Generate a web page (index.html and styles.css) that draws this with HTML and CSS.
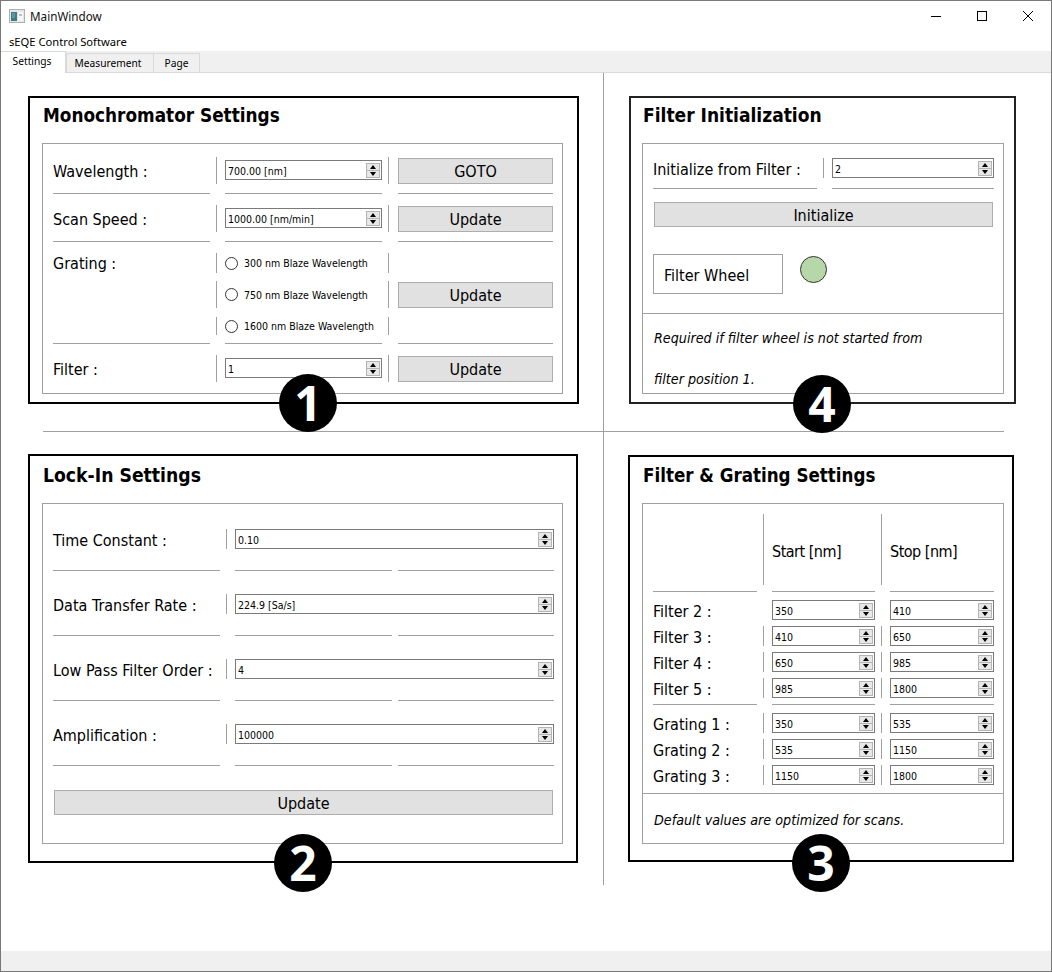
FILE: index.html
```html
<!DOCTYPE html>
<html lang="en">
<head>
<meta charset="utf-8">
<title>MainWindow</title>
<link rel="stylesheet" href="styles.css">
</head>
<body>
<div class="window">
  <header class="titlebar">
    <svg class="app-icon" width="16" height="14" viewBox="0 0 16 14"><rect x="0.5" y="0.5" width="15" height="13" fill="#e6e6e6" stroke="#b0b0b0"/><rect x="2" y="3" width="6" height="9" fill="#3c7f78"/><rect x="3" y="4" width="3" height="5" fill="#5f93b4"/><rect x="9" y="3" width="5" height="9" fill="#f6f6f6"/><rect x="10" y="5" width="3" height="2" fill="#c0c0c0"/></svg>
    <span class="title-text">MainWindow</span>
    <div class="win-controls">
      <span class="win-btn"><svg width="12" height="12" viewBox="0 0 12 12"><path d="M1 6.5H11" stroke="#000" fill="none"/></svg></span>
      <span class="win-btn"><svg width="12" height="12" viewBox="0 0 12 12"><rect x="1.5" y="1.5" width="9" height="9" stroke="#000" fill="none"/></svg></span>
      <span class="win-btn"><svg width="12" height="12" viewBox="0 0 12 12"><path d="M1 1L11 11M11 1L1 11" stroke="#000" fill="none"/></svg></span>
    </div>
  </header>
  <nav class="menubar">sEQE Control Software</nav>
  <div class="tabbar">
    <span class="tab tab-active">Settings</span>
    <span class="tab tab-measure">Measurement</span>
    <span class="tab tab-page">Page</span>
  </div>

  <main class="content">
    <div class="cell">
      <section class="panel panel-mono">
        <h2 class="panel-title">Monochromator Settings</h2>
        <div class="box box-mono">
          <div class="row mono-cols row-27">
            <span class="label">Wavelength :</span><i class="vl vl-27"></i>
            <div class="spin spin-top"><span class="val">700.00 [nm]</span><span class="arrows"><b class="up"></b><b class="dn"></b></span></div><i class="vl vl-27"></i>
            <button class="btn btn-top">GOTO</button>
          </div>
          <div class="rule mono-cols"><i class="hr"></i><i></i><i class="hr"></i><i></i><i class="hr"></i></div>
          <div class="row mono-cols row-27">
            <span class="label">Scan Speed :</span><i class="vl vl-27"></i>
            <div class="spin spin-top"><span class="val">1000.00 [nm/min]</span><span class="arrows"><b class="up"></b><b class="dn"></b></span></div><i class="vl vl-27"></i>
            <button class="btn btn-top">Update</button>
          </div>
          <div class="rule mono-cols"><i class="hr"></i><i></i><i class="hr"></i><i></i><i class="hr"></i></div>
          <div class="row mono-cols row-20">
            <span class="label">Grating :</span><i class="vl vl-20"></i>
            <label class="radio"><span class="dot"></span>300 nm Blaze Wavelength</label><i class="vl vl-20"></i>
            <span></span>
          </div>
          <div class="row mono-cols row-27 row-gap8">
            <span></span><i class="vl vl-27"></i>
            <label class="radio"><span class="dot"></span>750 nm Blaze Wavelength</label><i class="vl vl-27"></i>
            <button class="btn btn-top">Update</button>
          </div>
          <div class="row mono-cols row-18 row-gap9">
            <span></span><i class="vl vl-18"></i>
            <label class="radio"><span class="dot"></span>1600 nm Blaze Wavelength</label><i class="vl vl-18"></i>
            <span></span>
          </div>
          <div class="rule rule-after-grating mono-cols"><i class="hr"></i><i></i><i class="hr"></i><i></i><i class="hr"></i></div>
          <div class="row mono-cols row-27">
            <span class="label">Filter :</span><i class="vl vl-27"></i>
            <div class="spin spin-top"><span class="val">1</span><span class="arrows"><b class="up"></b><b class="dn"></b></span></div><i class="vl vl-27"></i>
            <button class="btn btn-top">Update</button>
          </div>
        </div>
        <span class="badge badge-1">1</span>
      </section>
    </div>

    <i class="v-divider"></i>

    <div class="cell">
      <section class="panel panel-init">
        <h2 class="panel-title">Filter Initialization</h2>
        <div class="box box-init">
          <div class="init-top">
            <div class="row init-cols row-20">
              <span class="label">Initialize from Filter :</span><i class="vl vl-20"></i>
              <div class="spin"><span class="val">2</span><span class="arrows"><b class="up"></b><b class="dn"></b></span></div>
            </div>
            <div class="rule init-cols"><i class="hr"></i><i></i><i class="hr"></i></div>
            <button class="btn btn-init">Initialize</button>
            <div class="wheel-row">
              <span class="wheel-label">Filter Wheel</span>
              <span class="led"></span>
            </div>
          </div>
          <p class="note note-init">Required if filter wheel is not started from<br>filter position 1.</p>
        </div>
        <span class="badge badge-4">4</span>
      </section>
    </div>

    <i class="h-divider h-left"></i>
    <i class="h-divider h-right"></i>

    <div class="cell">
      <section class="panel panel-lock">
        <h2 class="panel-title">Lock-In Settings</h2>
        <div class="box box-lock">
          <div class="row lock-cols row-20">
            <span class="label">Time Constant :</span><i class="vl vl-20"></i>
            <div class="spin"><span class="val">0.10</span><span class="arrows"><b class="up"></b><b class="dn"></b></span></div>
          </div>
          <div class="rule rule-lock lock-rule"><i class="hr"></i><i></i><i class="hr"></i><i></i><i class="hr"></i></div>
          <div class="row lock-cols row-20">
            <span class="label">Data Transfer Rate :</span><i class="vl vl-20"></i>
            <div class="spin"><span class="val">224.9 [Sa/s]</span><span class="arrows"><b class="up"></b><b class="dn"></b></span></div>
          </div>
          <div class="rule rule-lock lock-rule"><i class="hr"></i><i></i><i class="hr"></i><i></i><i class="hr"></i></div>
          <div class="row lock-cols row-20">
            <span class="label">Low Pass Filter Order :</span><i class="vl vl-20"></i>
            <div class="spin"><span class="val">4</span><span class="arrows"><b class="up"></b><b class="dn"></b></span></div>
          </div>
          <div class="rule rule-lock lock-rule"><i class="hr"></i><i></i><i class="hr"></i><i></i><i class="hr"></i></div>
          <div class="row lock-cols row-20">
            <span class="label">Amplification :</span><i class="vl vl-20"></i>
            <div class="spin"><span class="val">100000</span><span class="arrows"><b class="up"></b><b class="dn"></b></span></div>
          </div>
          <div class="rule rule-lock lock-rule"><i class="hr"></i><i></i><i class="hr"></i><i></i><i class="hr"></i></div>
          <button class="btn btn-lock">Update</button>
        </div>
        <span class="badge badge-2">2</span>
      </section>
    </div>

    <div class="cell">
      <section class="panel panel-fg">
        <h2 class="panel-title">Filter &amp; Grating Settings</h2>
        <div class="box box-fg">
          <div class="fg-top">
            <div class="row fg-cols fg-head">
              <span></span><i class="vl vl-71"></i>
              <span class="label label-head">Start [nm]</span><i class="vl vl-71"></i>
              <span class="label label-head">Stop [nm]</span>
            </div>
            <div class="rule fg-rule fg-cols"><i class="hr"></i><i></i><i class="hr"></i><i></i><i class="hr"></i></div>
            <div class="row fg-cols row-20">
              <span class="label">Filter 2 :</span><i></i>
              <div class="spin"><span class="val">350</span><span class="arrows"><b class="up"></b><b class="dn"></b></span></div><i></i>
              <div class="spin"><span class="val">410</span><span class="arrows"><b class="up"></b><b class="dn"></b></span></div>
            </div>
            <div class="row fg-cols row-20 row-gap6">
              <span class="label">Filter 3 :</span><i class="vl vl-20"></i>
              <div class="spin"><span class="val">410</span><span class="arrows"><b class="up"></b><b class="dn"></b></span></div><i class="vl vl-20"></i>
              <div class="spin"><span class="val">650</span><span class="arrows"><b class="up"></b><b class="dn"></b></span></div>
            </div>
            <div class="row fg-cols row-20 row-gap6">
              <span class="label">Filter 4 :</span><i class="vl vl-20"></i>
              <div class="spin"><span class="val">650</span><span class="arrows"><b class="up"></b><b class="dn"></b></span></div><i class="vl vl-20"></i>
              <div class="spin"><span class="val">985</span><span class="arrows"><b class="up"></b><b class="dn"></b></span></div>
            </div>
            <div class="row fg-cols row-20 row-gap6">
              <span class="label">Filter 5 :</span><i class="vl vl-20"></i>
              <div class="spin"><span class="val">985</span><span class="arrows"><b class="up"></b><b class="dn"></b></span></div><i class="vl vl-20"></i>
              <div class="spin"><span class="val">1800</span><span class="arrows"><b class="up"></b><b class="dn"></b></span></div>
            </div>
            <div class="rule fg-rule fg-cols"><i class="hr"></i><i></i><i class="hr"></i><i></i><i class="hr"></i></div>
            <div class="row fg-cols row-20">
              <span class="label">Grating 1 :</span><i class="vl vl-20"></i>
              <div class="spin"><span class="val">350</span><span class="arrows"><b class="up"></b><b class="dn"></b></span></div><i class="vl vl-20"></i>
              <div class="spin"><span class="val">535</span><span class="arrows"><b class="up"></b><b class="dn"></b></span></div>
            </div>
            <div class="row fg-cols row-20 row-gap6">
              <span class="label">Grating 2 :</span><i class="vl vl-20"></i>
              <div class="spin"><span class="val">535</span><span class="arrows"><b class="up"></b><b class="dn"></b></span></div><i class="vl vl-20"></i>
              <div class="spin"><span class="val">1150</span><span class="arrows"><b class="up"></b><b class="dn"></b></span></div>
            </div>
            <div class="row fg-cols row-20 row-gap6">
              <span class="label">Grating 3 :</span><i class="vl vl-20"></i>
              <div class="spin"><span class="val">1150</span><span class="arrows"><b class="up"></b><b class="dn"></b></span></div><i class="vl vl-20"></i>
              <div class="spin"><span class="val">1800</span><span class="arrows"><b class="up"></b><b class="dn"></b></span></div>
            </div>
          </div>
          <p class="note note-fg">Default values are optimized for scans.</p>
        </div>
        <span class="badge badge-3">3</span>
      </section>
    </div>
  </main>

  <footer class="statusbar"></footer>
</div>
</body>
</html>
```

FILE: styles.css
```css
* { box-sizing: border-box; }
html, body { margin: 0; padding: 0; background: #fff; }
body {
  font-family: "DejaVu Sans Condensed", "DejaVu Sans", sans-serif;
  color: #000;
}
.window {
  width: 1052px; height: 972px;
  border: 1px solid #787878;
  display: flex; flex-direction: column;
  background: #fff;
  overflow: hidden;
}
.titlebar {
  height: 32px; flex: none;
  display: flex; align-items: center;
  padding: 0 0 2px 8px;
  font-family: "Noto Sans", sans-serif; font-size: 11.7px;
}
.app-icon { flex: none; margin-right: 5px; }
.title-text { flex: 1; color: #111; }
.win-controls { display: flex; height: 100%; }
.win-btn { width: 46px; display: flex; align-items: center; justify-content: center; }
.menubar {
  height: 18px; flex: none;
  padding-left: 8px; line-height: 18px;
  font-family: "Noto Sans", sans-serif; font-size: 11.2px;
}
.tabbar {
  height: 22px; flex: none;
  background: #f0f0f0;
  border-bottom: 1px solid #d9d9d9;
  display: flex; align-items: flex-end;
  font-family: "Noto Sans", sans-serif; font-size: 10.2px;
}
.tab {
  height: 19px; line-height: 18px; text-align: center;
  border: 1px solid #d9d9d9; border-bottom: 0;
  background: #f0f0f0;
  margin-left: -1px;
}
.tab-active {
  width: 65px; height: 22px; margin: 0 0 -1px 0;
  background: #fff; line-height: 19px;
  border-left: 0; position: relative;
  padding-right: 2px;
}
.tab-measure { width: 88px; margin-left: 0; padding-right: 4px; }
.tab-page { width: 47px; }

.content {
  flex: 1;
  display: grid;
  grid-template-columns: 602px 1px 1fr;
  grid-template-rows: 358px 1px 453px 1fr;
}
.cell { min-width: 0; }
.v-divider { grid-column: 2; grid-row: 1 / 4; background: #a0a0a0; height: 812px; }
.h-divider { background: #a0a0a0; height: 1px; grid-row: 2; }
.h-left { grid-column: 1; margin-left: 42px; }
.h-right { grid-column: 3; margin-right: 47px; }

.panel {
  position: relative;
  border: 2px solid #000;
  background: #fff;
}
.panel-mono { width: 551px; height: 308px; margin: 23px 0 0 27px; }
.panel-init { width: 387px; height: 308px; margin: 23px 0 0 25px; border-color: #222; }
.panel-lock { width: 550px; height: 409px; margin: 22px 0 0 27px; }
.panel-fg { width: 386px; height: 407px; margin: 23px 0 0 24px; }

.panel-title {
  margin: 0 0 11px 13px;
  height: 34px; line-height: 36px;
  font-size: 18.8px; font-weight: 700;
  white-space: nowrap;
}
.panel-init .panel-title { margin-left: 12px; font-size: 19px; line-height: 34px; }
.panel-lock .panel-title { margin-bottom: 13px; height: 34px; line-height: 40px; font-size: 19.2px; }
.panel-fg .panel-title { margin-bottom: 12px; height: 34px; line-height: 38px; font-size: 18.6px; }

.box {
  margin-left: 12px;
  border: 1px solid #a0a0a0;
  display: flex; flex-direction: column;
}
.panel-init .box { margin-left: 11px; }
.box-mono { width: 521px; height: 251px; padding: 13px 0 0 10px; }
.box-init { width: 362px; height: 251px; }
.box-lock { width: 521px; height: 341px; padding: 25px 0 0 10px; }
.box-fg { width: 362px; height: 341px; }

.row { display: grid; align-items: center; }
.row-27 { height: 27px; }
.row-20 { height: 20px; }
.row-18 { height: 18px; }
.row-gap8 { margin-top: 8px; }
.row-gap9 { margin-top: 9px; }
.row-gap6 { margin-top: 6px; }

.mono-cols { display: grid; grid-template-columns: 157px 15px 157px 16px 155px; }
.lock-cols { grid-template-columns: 167px 15px 319px; }
.lock-rule { display: grid; grid-template-columns: 167px 15px 157px 6px 156px; }
.init-cols { display: grid; grid-template-columns: 164px 15px 162px; }
.fg-cols { display: grid; grid-template-columns: 104px 15px 103px 15px 104px; }

.rule { margin: 9px 0 11px; height: 1px; }
.rule-after-grating { margin-top: 8px; }
.rule-lock { margin: 21px 0 23px; }
.fg-rule { margin: 6px 0 8px; }
.hr { display: block; height: 1px; background: #a0a0a0; }
.vl { display: block; width: 1px; margin-left: 6px; background: #a0a0a0; align-self: start; }
.vl-27 { height: 27px; }
.vl-20 { height: 20px; }
.vl-18 { height: 18px; }
.vl-71 { height: 71px; }

.label { font-size: 16px; line-height: 20px; white-space: nowrap; position: relative; top: 1px; }
.box-lock .label, .fg-top .label, .init-top .label { top: 2px; }
.label-head { letter-spacing: -0.5px; }

.spin {
  height: 20px;
  border: 1px solid #7a7a7a;
  background: #fff;
  display: flex; align-items: center; justify-content: space-between;
  padding: 0 1px 0 2px;
  font-size: 10.5px;
}
.spin-top { align-self: start; margin-top: 3px; }
.val { white-space: nowrap; padding-top: 1px; }
.arrows { display: flex; flex-direction: column; width: 14px; height: 15px; flex: none; }
.arrows b {
  display: flex; align-items: center; justify-content: center;
  height: 8px; background: #e8e8e8; border: 1px solid #b4b4b4;
}
.arrows b + b { border-top: 0; height: 7px; }
.arrows b::after {
  content: ""; width: 0; height: 0;
  border-left: 3.5px solid transparent; border-right: 3.5px solid transparent;
}
.arrows .up::after { border-bottom: 4px solid #000; }
.arrows .dn::after { border-top: 4px solid #000; }

.btn {
  display: block; padding: 0;
  height: 26px;
  background: #e1e1e1; border: 1px solid #adadad; border-radius: 0;
  font: 16px "DejaVu Sans Condensed", "DejaVu Sans", sans-serif;
  color: #000;
}
.btn-top { align-self: start; margin-top: 1px; }
.btn-lock { width: 499px; height: 25px; margin: 1px 0 0 1px; padding-top: 1px; }
.btn-init { width: 339px; height: 25px; margin-left: 1px; padding-top: 1px; }

.radio { display: flex; align-items: center; font-size: 10.5px; white-space: nowrap; align-self: center; }
.dot {
  width: 13px; height: 13px; flex: none;
  border: 1px solid #333; border-radius: 50%;
  margin-right: 6px; background: #fff;
}

.init-top { height: 170px; flex: none; padding: 14px 0 0 10px; border-bottom: 1px solid #a0a0a0; }
.init-top .rule { margin: 10px 0 13px; }
.wheel-row { display: flex; margin-top: 27px; }
.wheel-label {
  width: 130px; height: 40px;
  border: 1px solid #a0a0a0;
  padding-left: 10px;
  font-size: 16px; line-height: 40px;
  padding-top: 1px;
}
.led {
  width: 27px; height: 27px; margin: 2px 0 0 17px;
  background: #b6d7a8; border: 1px solid #333; border-radius: 50%;
}
.note { margin: 0; font-style: italic; font-size: 14.2px; line-height: 41px; padding-left: 11px; }
.note-init { padding-top: 4px; }
.fg-top { height: 290px; flex: none; padding: 10px 0 0 10px; border-bottom: 1px solid #a0a0a0; }
.fg-head { height: 71px; }
.note-fg { padding-top: 6px; }

.badge {
  position: absolute;
  width: 58px; height: 58px; border-radius: 50%;
  background: #000; color: #fff;
  font: 700 48px/58px "Open Sans", sans-serif;
  text-align: center;
}
.badge-1 { left: 249px; top: 276px; }
.badge-2 { left: 244px; top: 378px; }
.badge-3 { left: 162px; top: 377px; }
.badge-4 { left: 162px; top: 277px; }

.statusbar { height: 20px; flex: none; background: #f0f0f0; }
```
